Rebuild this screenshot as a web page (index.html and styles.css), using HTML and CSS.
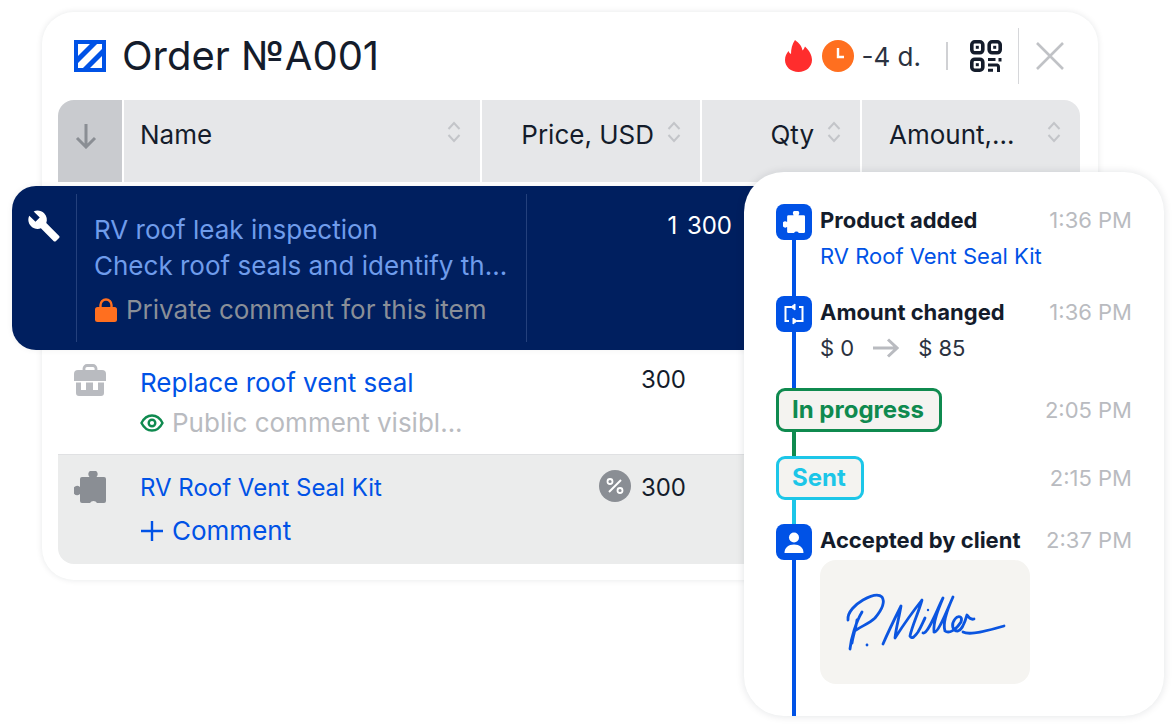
FILE: index.html
```html
<!DOCTYPE html>
<html lang="en">
<head>
	<meta charset="UTF-8">
	<title>Order A001</title>
	<link rel="stylesheet" href="styles.css">
</head>
<body>
	<div class="stage">
		<div class="card">
			<div class="card-head">
				<svg class="title-icon" viewBox="0 0 32 32">
					<rect x="4" y="4" width="24" height="24" fill="#fff"/>
					<path d="M0 23.500L23.500 0M8.500 32L32 8.500" stroke="#0052e6" stroke-width="5" fill="none"/>
					<path d="M0 0H32V32H0ZM4 4V28H28V4Z" fill="#0052e6" fill-rule="evenodd"/>
				</svg>
				<h1>Order №A001</h1>
				<svg class="flame" viewBox="0 0 27 32"><path d="M10 0C14 3 17 6 17.500 10.500C18.500 9.500 19.500 8 20 6.500C24 10 27 15 27 20C27 27 21 32 13.500 32C6 32 0 27 0 20C0 16 1.500 13.500 3.500 11C4 12.500 5 13.500 6 14C6 9 7 4 10 0Z" fill="#ff2d2d"/></svg>
				<svg class="clock" viewBox="0 0 32 32"><circle cx="16" cy="16" r="16" fill="#ff6f1f"/><path d="M16 8V17H22" stroke="#fff" stroke-width="2.400" fill="none"/></svg>
				<span class="overdue">-4 d.</span>
				<span class="sep"></span>
				<svg class="qr" viewBox="0 0 32 32">
					<g fill="none" stroke="#141c2b" stroke-width="3.600">
						<rect x="1.800" y="1.800" width="11" height="11" rx="3"/>
						<rect x="19.200" y="1.800" width="11" height="11" rx="3"/>
						<rect x="1.800" y="19.200" width="11" height="11" rx="3"/>
					</g>
					<path d="M18 19.500H25.500M30 18V21.500M18 25H27A2 2 0 0 1 28.500 27V32M18 30.300H23" fill="none" stroke="#141c2b" stroke-width="3"/>
					<g fill="#141c2b">
						<rect x="5.800" y="5.800" width="3" height="3"/>
						<rect x="23.200" y="5.800" width="3" height="3"/>
						<rect x="5.800" y="23.200" width="3" height="3"/>
					</g>
				</svg>
				<span class="head-rule"></span>
				<svg class="close" viewBox="0 0 28 28"><path d="M1 1L27 27M27 1L1 27" stroke="#c0c2c6" stroke-width="2.600" fill="none"/></svg>
			</div>

			<div class="table-head">
				<div class="th th-sort">
					<svg width="22" height="26" viewBox="0 0 22 26"><path d="M11 1V24M2 15L11 24L20 15" stroke="#8a8e94" stroke-width="3" fill="none"/></svg>
				</div>
				<div class="th th-between"><span>Name</span><svg class="chev" viewBox="0 0 14 22"><path d="M1.500 8L7 2L12.500 8M1.500 14L7 20L12.500 14" stroke="#c3c5c9" stroke-width="2" fill="none"/></svg></div>
				<div class="th th-end"><span>Price, USD</span><svg class="chev" viewBox="0 0 14 22"><path d="M1.500 8L7 2L12.500 8M1.500 14L7 20L12.500 14" stroke="#c3c5c9" stroke-width="2" fill="none"/></svg></div>
				<div class="th th-end"><span>Qty</span><svg class="chev" viewBox="0 0 14 22"><path d="M1.500 8L7 2L12.500 8M1.500 14L7 20L12.500 14" stroke="#c3c5c9" stroke-width="2" fill="none"/></svg></div>
				<div class="th th-between th-amount"><span>Amount,...</span><svg class="chev" viewBox="0 0 14 22"><path d="M1.500 8L7 2L12.500 8M1.500 14L7 20L12.500 14" stroke="#c3c5c9" stroke-width="2" fill="none"/></svg></div>
			</div>

			<!-- selected row sticks out of the card -->
			<div class="row-selected">
				<div class="sel-icon">
					<svg width="34" height="34" viewBox="0 0 24 24"><path d="M22.700 19l-9.100-9.100c.9-2.300.4-5-1.500-6.900-2-2-5-2.400-7.400-1.300L9 6 6 9 1.600 4.700C.4 7.100.9 10.100 2.900 12.100c1.900 1.900 4.600 2.400 6.900 1.500l9.100 9.100c.4.4 1 .4 1.400 0l2.300-2.300c.5-.4.5-1.100.1-1.400z" fill="#fff"/></svg>
				</div>
				<div class="sel-name">
					<div class="sel-line">RV roof leak inspection</div>
					<div class="sel-line">Check roof seals and identify th...</div>
					<div class="sel-note">
						<svg width="22" height="24" viewBox="0 0 22 24"><path d="M5.500 11V7A5.500 5.500 0 0 1 16.500 7V11" stroke="#ff6f1f" stroke-width="2.400" fill="none"/><rect y="9" width="22" height="15" rx="2.500" fill="#ff6f1f"/></svg>
						<span>Private comment for this item</span>
					</div>
				</div>
				<div class="sel-price">1 300</div>
			</div>

			<div class="row row-plain">
				<div class="row-icon">
					<svg width="32" height="32" viewBox="0 0 32 32" fill="#b9bbc0">
						<path d="M10 7V4.500A3 3 0 0 1 13 1.500H19A3 3 0 0 1 22 4.500V7" stroke="#b9bbc0" stroke-width="2.800" fill="none"/>
						<path d="M4 6H28A4 4 0 0 1 32 10V17H0V10A4 4 0 0 1 4 6Z"/>
						<path d="M2 18.500H7V26H12V18.500H19V26H24V18.500H30V29A3 3 0 0 1 27 32H5A3 3 0 0 1 2 29Z"/>
					</svg>
				</div>
				<div class="row-name">
					<a class="link">Replace roof vent seal</a>
					<div class="note note-public">
						<svg width="24" height="18" viewBox="0 0 24 18"><path d="M1.500 9C4 4 8 1.500 12 1.500S20 4 22.500 9C20 14 16 16.500 12 16.500S4 14 1.500 9Z" stroke="#0f8a4f" stroke-width="2.400" fill="none"/><circle cx="12" cy="9" r="3.300" stroke="#0f8a4f" stroke-width="2.400" fill="none"/></svg>
						<span>Public comment visibl...</span>
					</div>
				</div>
				<div class="row-price row-price-up">300</div>
			</div>

			<div class="row row-part">
				<div class="row-icon">
					<svg width="32" height="32" viewBox="0 0 32 32"><path d="M8 6h7.500a4.500 4.500 0 1 1 7 0H30a2 2 0 0 1 2 2v22a2 2 0 0 1-2 2h-7a4 4 0 0 0-7 0H8a2 2 0 0 1-2-2v-7a4.500 4.500 0 1 1 0-7V8a2 2 0 0 1 2-2z" fill="#8a8e94"/></svg>
				</div>
				<div class="row-name">
					<a class="link link-part">RV Roof Vent Seal Kit</a>
					<a class="link add-comment">
						<svg width="22" height="24" viewBox="0 0 22 24"><path d="M11 2V22M0 12H22" stroke="#0052e6" stroke-width="2.400" fill="none"/></svg>
						<span>Comment</span>
					</a>
				</div>
				<div class="row-price">
					<svg width="32" height="32" viewBox="0 0 32 32"><circle cx="16" cy="16" r="16" fill="#8a8e94"/><path d="M10 22L22 10" stroke="#fff" stroke-width="2" fill="none"/><circle cx="11" cy="11.500" r="2.500" stroke="#fff" stroke-width="1.800" fill="none"/><circle cx="21" cy="20.500" r="2.500" stroke="#fff" stroke-width="1.800" fill="none"/></svg>
					<span>300</span>
				</div>
			</div>
		</div>

		<!-- history popup over the table -->
		<div class="history">
			<div class="event event-tall">
				<div class="event-head">
					<span class="event-icon">
						<svg width="22" height="22" viewBox="0 0 32 32"><path d="M8 6h7.500a4.500 4.500 0 1 1 7 0H30a2 2 0 0 1 2 2v22a2 2 0 0 1-2 2h-7a4 4 0 0 0-7 0H8a2 2 0 0 1-2-2v-7a4.500 4.500 0 1 1 0-7V8a2 2 0 0 1 2-2z" fill="#fff"/></svg>
					</span>
					<b>Product added</b>
					<time>1:36 PM</time>
				</div>
				<a class="event-body link-small">RV Roof Vent Seal Kit</a>
			</div>
			<div class="event event-tall">
				<div class="event-head">
					<span class="event-icon">
						<svg width="22" height="22" viewBox="0 0 22 22"><path d="M8 4H2.500V18H6M14 18H19.500V4H16" stroke="#fff" stroke-width="2" fill="none"/><path d="M12 1L8 4L12 7ZM10 15L14 18L10 21Z" fill="#fff" stroke="#fff"/></svg>
					</span>
					<b>Amount changed</b>
					<time>1:36 PM</time>
				</div>
				<div class="event-body amount">
					<span>$ 0</span>
					<svg width="26" height="20" viewBox="0 0 26 20"><path d="M0 10H24M15 1.500L24 10L15 18.500" stroke="#b9bbc0" stroke-width="3" fill="none"/></svg>
					<span>$ 85</span>
				</div>
			</div>
			<div class="event event-status event-green">
				<span class="status status-green">In progress</span>
				<time>2:05 PM</time>
			</div>
			<div class="event event-status event-cyan">
				<span class="status status-cyan">Sent</span>
				<time>2:15 PM</time>
			</div>
			<div class="event">
				<div class="event-head">
					<span class="event-icon">
						<svg width="24" height="24" viewBox="0 0 24 24" fill="#fff"><circle cx="12" cy="7.500" r="5"/><path d="M2.500 23C2.500 17.500 6.500 14.500 12 14.500S21.500 17.500 21.500 23Z"/></svg>
					</span>
					<b>Accepted by client</b>
					<time>2:37 PM</time>
				</div>
				<div class="signature">
					<svg width="210" height="124" viewBox="0 0 210 124">
						<g fill="none" stroke="#0b55e0" stroke-width="2.800" stroke-linecap="round" stroke-linejoin="round">
							<path d="M30 89C31 78 36 62 42 52M28 60C27 52 36 44 43 40C50 36 58 33 62 37C66 43 60 52 55 58C50 63 42 66 36 70M37 60C36 68 33 76 32 83"/>
							<path d="M63 84C69 70 75 58 81 46C79 58 76 68 75 78C84 64 94 50 102 40C98 54 92 66 90 76C92 80 95 76 98 72C101 67 103 62 105 58M103 73C108 74 116 52 123 38C118 50 113 62 114 72C118 74 127 50 133 37C128 48 122 62 125 71C129 74 136 70 141 62C143 56 138 55 135 59C131 64 132 71 138 71C142 70 145 62 147 55C149 58 151 60 154 59M143 72C150 76 170 70 184 66"/>
						</g>
						<circle cx="47" cy="85" r="1.400" fill="#0b55e0"/>
						<circle cx="108" cy="50" r="1.200" fill="#0b55e0"/>
					</svg>
				</div>
			</div>
		</div>
	</div>
</body>
</html>
```

FILE: styles.css
```css
html, body { margin: 0; height: 100%; background-color: #fff; overflow: hidden; }
body { font-family: Inter, "Liberation Sans", sans-serif; color: #141c2b; }
svg { display: block; flex-shrink: 0; }
.stage { position: relative; width: 1176px; height: 728px; box-sizing: border-box; padding: 12px 0 0 42px; }

.card { width: 1056px; height: 568px; box-sizing: border-box; padding: 0 18px 0 16px; background-color: #fff; border-radius: 32px; box-shadow: 0 0 6px rgba(20,28,43,0.1); }
.card-head { display: flex; align-items: center; height: 88px; padding: 0 0 0 16px; }
.title-icon { width: 32px; height: 32px; margin-right: 16px; }
h1 { flex-grow: 1; margin: 0; font-size: 40px; font-weight: 400; line-height: 46px; }
.flame { width: 27px; height: 32px; margin-right: 10px; }
.clock { width: 32px; height: 32px; margin-right: 8px; }
.overdue { font-size: 26px; margin-right: 25px; color: #2b3240; }
.sep { width: 2px; height: 28px; margin-right: 22px; background-color: #d0d1d4; }
.qr { width: 32px; height: 32px; margin-right: 16px; }
.head-rule { width: 1px; height: 56px; margin-right: 17px; background-color: #d6d7da; }
.close { width: 28px; height: 28px; margin-right: 16px; }

.table-head { display: grid; grid-template-columns: 64px 356px 218px 158px 218px; gap: 2px; height: 82px; }
.th { display: flex; align-items: flex-start; box-sizing: border-box; padding: 18px 19px 0 16px; background-color: #e6e7e9; font-size: 26px; line-height: 34px; }
.th:last-child { border-top-right-radius: 16px; }
.th-sort { justify-content: center; padding: 23px 8px 0 0; background-color: #c9cbcf; border-top-left-radius: 16px; }
.th-between { justify-content: space-between; }
.th-end { justify-content: flex-end; gap: 13px; }
.th-amount { padding-left: 27px; }
.chev { width: 14px; height: 22px; margin-top: 3px; }

.row-selected { display: grid; grid-template-columns: 65px 450px 220px; width: 1068px; height: 164px; margin: 4px 0 0 -46px; background-color: #001f5f; border-radius: 24px; box-shadow: 0 0 6px rgba(0,0,0,0.06); }
.sel-icon { display: flex; justify-content: center; padding: 15px 0 0; margin: 8px 0; border-right: 1px solid #24407c; }
.sel-name { box-sizing: border-box; margin: 8px 0; padding: 18px 0 0 17px; border-right: 1px solid #24407c; font-size: 26px; line-height: 36px; color: #6f9ceb; white-space: nowrap; }
.sel-note { display: flex; align-items: center; gap: 9px; margin-top: 8px; padding-left: 1px; color: #8a8f98; }
.sel-price { padding: 22px 15px 0 0; font-size: 24px; line-height: 36px; text-align: right; word-spacing: 3px; color: #fff; }

.row { display: grid; grid-template-columns: 66px 358px 220px; }
.row-plain { height: 104px; }
.row-part { height: 110px; background-color: #ebecec; border-top: 1px solid #e0e1e3; box-sizing: border-box; border-bottom-left-radius: 16px; border-bottom-right-radius: 16px; }
.row-icon { display: flex; justify-content: center; padding: 14px 2px 0 0; }
.row-part .row-icon { padding-top: 16px; }
.row-name { padding: 15px 0 0 16px; font-size: 26px; line-height: 36px; }
.row-part .row-name { padding-top: 15px; }
.link { color: #0052e6; }
.note { display: flex; align-items: center; gap: 8px; margin-top: 4px; color: #b9bbc0; white-space: nowrap; }
.link-part { display: block; font-size: 24px; }
.add-comment { display: flex; align-items: center; gap: 9px; margin: 7px 0 0 1px; }
.row-price { display: flex; justify-content: flex-end; align-items: flex-start; gap: 10px; padding: 15px 16px 0 0; font-size: 24px; line-height: 36px; }
.row-price-up { padding-top: 12px; }

.history { position: absolute; left: 744px; top: 172px; width: 420px; height: 544px; box-sizing: border-box; padding: 32px 32px 0; background-color: #fff; border-radius: 40px; box-shadow: 0 0 8px rgba(20,28,43,0.12); overflow: hidden; }
.event { position: relative; height: 92px; }
.event::before { content: ""; position: absolute; left: 16px; top: 0; width: 4px; height: 100%; background-color: #0052e6; }
.event:last-child { height: 480px; }
.event-status { display: flex; justify-content: space-between; height: 68px; align-items: flex-start; }
.event-green::before { background-color: #0f8a4f; }
.event-cyan::before { background-color: #1cc6e8; }
.event-head { position: relative; display: flex; align-items: center; height: 36px; }
.event-head b { flex-grow: 1; margin-left: 8px; padding-bottom: 4px; font-size: 22px; font-weight: 700; }
.event-head time { padding-bottom: 4px; }
.event-icon { position: relative; display: flex; align-items: center; justify-content: center; width: 36px; height: 36px; background-color: #0052e6; border-radius: 8px; }
time { font-size: 22px; color: #b9bbc0; line-height: 32px; }
.event-status time { position: relative; line-height: 44px; }
.event-body { position: relative; display: block; margin: 0 0 0 44px; font-size: 22px; line-height: 32px; }
.link-small { color: #0052e6; }
.amount { display: flex; align-items: center; gap: 19px; color: #2b3240; }
.status { position: relative; box-sizing: border-box; height: 44px; padding: 0 15px 0 13px; font-size: 24px; font-weight: 700; line-height: 38px; background-color: #f4f3f0; border: 3px solid; border-radius: 9px; }
.status-green { color: #0f8a4f; border-color: #0f8a4f; }
.status-cyan { color: #1cc6e8; border-color: #1cc6e8; }
.signature { position: relative; width: 210px; height: 124px; margin-left: 44px; background-color: #f5f4f1; border-radius: 16px; }
```
